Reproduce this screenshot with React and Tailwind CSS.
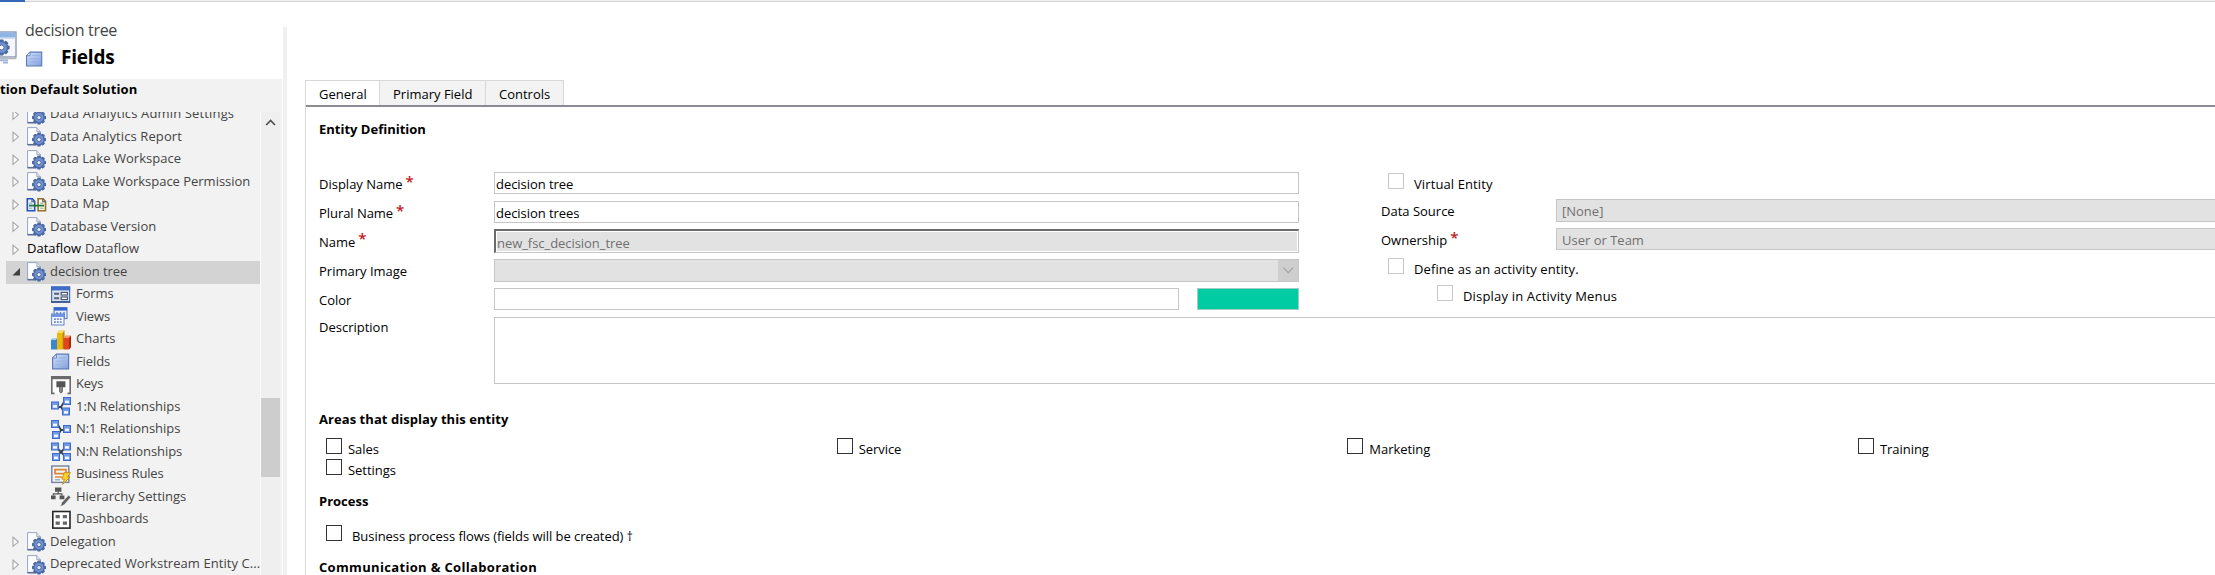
const Svg = ({ children, className = "w-5 h-5" }) => (
  <svg viewBox="0 0 20 20" className={"block shrink-0 " + className}>{children}</svg>
);

const GEAR_TEETH = [0, 45, 90, 135, 180, 225, 270, 315];

const Gear = ({ cx, cy, r, fill = "#4a68a6", hole = "#dfe8f6" }) => (
  <g>
    {GEAR_TEETH.map((a) => (
      <rect key={a} x={cx - r * 0.25} y={cy - r} width={r * 0.5} height={r} rx="0.8" fill={fill} transform={`rotate(${a} ${cx} ${cy})`} />
    ))}
    <circle cx={cx} cy={cy} r={r * 0.82} fill={fill} />
    <circle cx={cx} cy={cy} r={r * 0.66} fill="#7391cc" />
    <circle cx={cx} cy={cy} r={r * 0.3} fill={hole} stroke="#3d5c9c" strokeWidth="0.8" />
  </g>
);

const EntityIcon = () => (
  <Svg>
    <path d="M.6 .6h9.2l3.6 4V18H.6z" fill="#fdfdff" stroke="#98a4be" strokeWidth="1" />
    <path d="M.5 17.6h8" fill="none" stroke="#5a6c96" strokeWidth="1.4" />
    <path d="M9.8.6v4h3.6" fill="#dfe5f0" stroke="#98a4be" strokeWidth=".9" />
    <Gear cx={12} cy={12.6} r={7} />
  </Svg>
);

const DataMapIcon = () => (
  <Svg className="-ml-px h-5 w-[21px]">
    <path d="M.8 3.7h5l2.4 2.5v9.6H.8z" fill="#eaf2ff" stroke="#2352b8" strokeWidth="1.6" />
    <path d="M11.6 3.7h5l2.4 2.5v9.6h-7.4z" fill="#fff8e4" stroke="#96702e" strokeWidth="1.6" />
    <path d="M5.4 3.7v2.9h2.8M16.2 3.7v2.9H19" fill="none" stroke="#5a6880" strokeWidth="1.2" />
    <path d="M2.6 8.2h3M13.6 8.2h3.4M2.6 13.2h3M13.6 13.2h3.4" stroke="#8aa" strokeWidth="1" />
    <path d="M2.5 10.6h15" stroke="#237a38" strokeWidth="1.8" />
  </Svg>
);

const FormsIcon = () => (
  <Svg>
    <rect x=".6" y="2" width="18" height="15" fill="#d9e3f3" stroke="#4f70ae" strokeWidth="1.2" />
    <rect x="0" y="1.4" width="19.2" height="4" fill="#3f6cc6" />
    <path d="M0 17h19.2" stroke="#344f8a" strokeWidth="1.6" />
    <rect x="10.2" y="7.4" width="6.2" height="2.6" fill="#fff" stroke="#3f4d66" strokeWidth="1.1" />
    <rect x="10.2" y="12" width="6.2" height="2.6" fill="#fff" stroke="#3f4d66" strokeWidth="1.1" />
    <path d="M3 8.8h5.2M3 13.3h5.2" stroke="#566277" strokeWidth="1.9" />
  </Svg>
);

const ViewsIcon = () => (
  <Svg>
    <rect x="3" y=".6" width="13" height="11" fill="#e9f0fc" stroke="#4d72c2" />
    <rect x="3" y=".6" width="13" height="3" fill="#3563cc" />
    <path d="M6 5.2v2M9.5 5.2v2M13 5.2v6" stroke="#4668b6" strokeWidth="1.4" />
    <rect x=".6" y="7" width="12.4" height="11" fill="#f5f8fe" stroke="#6283cb" />
    <rect x=".6" y="7" width="12.4" height="3" fill="#6f95e2" />
    <path d="M3 12.2h8M3 15.2h8" stroke="#6d88be" strokeWidth="1.8" strokeDasharray="1.8 1.1" />
  </Svg>
);

const ChartsIcon = () => (
  <Svg>
    <path d="M0 10l2-2h4.5v11.5H0z" fill="#3a86d0" />
    <path d="M0 10l2-2h4.5l-1.6 2z" fill="#a5d0f4" />
    <path d="M6 3l2-2.5h5.4V18l-1.8 1.6H6z" fill="#e9b90e" />
    <path d="M6 3l2-2.5h5.4L11.6 3z" fill="#f8de70" />
    <path d="M11.6 3l1.8-2.5V18l-1.8 1.6z" fill="#b98a08" />
    <path d="M12.5 8l2-2.2H20V17l-2 2.4h-5.5z" fill="#e2441e" />
    <path d="M12.5 8l2-2.2H20L18 8z" fill="#f79a72" />
    <path d="M18 8l2-2.2V17l-2 2.4z" fill="#a82a0e" />
  </Svg>
);

const FieldsIcon = ({ className }) => (
  <Svg className={className}>
    <defs>
      <linearGradient id="fieldsFill" x1="0" y1="0" x2="1" y2="1">
        <stop offset="0" stopColor="#d3e0fa" />
        <stop offset="1" stopColor="#7f9fdc" />
      </linearGradient>
    </defs>
    <path d="M5.4 2.2h12.2v14.6H1.6V6z" fill="url(#fieldsFill)" stroke="#5f7bb6" strokeWidth="1.2" />
    <path d="M5.4 2.2V6H1.6z" fill="#f4f8ff" stroke="#5f7bb6" strokeWidth=".9" />
    <path d="M7.5 5.8h7.5M4.5 9.2H15M4.5 12.6H15" stroke="#9ab2e4" strokeWidth="1" />
  </Svg>
);

const KeysIcon = () => (
  <Svg>
    <path d="M3.5 18.4H.8V1.8h18.4v16.6h-2.7" fill="#fcfcfc" stroke="#6c6c6c" strokeWidth="1.6" />
    <rect x="0" y="1" width="20" height="3.2" fill="#6a6a6a" />
    <path d="M5.4 6.2h9v6h-2.6v4.6L10 18.6l-1.8-1.8v-4.6H5.4z" fill="#555" />
    <path d="M10 12v5" stroke="#c8c8c8" strokeWidth=".9" />
  </Svg>
);

const Node = ({ x, y }) => (
  <g>
    <rect x={x + 0.5} y={y + 0.5} width="7" height="7" fill="#7099e8" stroke="#3d6bcc" />
    <rect x={x + 2} y={y + 3.6} width="4" height="2.6" fill="#f4f8ff" />
  </g>
);

const OneToNIcon = () => (
  <Svg>
    <path d="M7 10h3l3-5M10 10l3 5" fill="none" stroke="#3c4048" strokeWidth="1.8" />
    <Node x={0} y={4.5} /><Node x={12} y={0} /><Node x={11} y={10.5} />
  </Svg>
);
const NToOneIcon = () => (
  <Svg>
    <path d="M13 10h-3L7 5M10 10l-3 5" fill="none" stroke="#3c4048" strokeWidth="1.8" />
    <Node x={0} y={0} /><Node x={1} y={11} /><Node x={12} y={5} />
  </Svg>
);
const NToNIcon = () => (
  <Svg>
    <path d="M6 6l8 8M14 6l-8 8" stroke="#3c4048" strokeWidth="1.9" />
    <Node x={0} y={0.5} /><Node x={12} y={0.5} /><Node x={1} y={11} /><Node x={12} y={11} />
  </Svg>
);

const RulesIcon = () => (
  <Svg>
    <rect x=".8" y="1" width="17" height="16.4" fill="#f4f5f8" stroke="#73829e" strokeWidth="1.4" />
    <path d="M4 4.6h11v4H4zM4 12h7" fill="none" stroke="#db8436" strokeWidth="1.7" />
    <path d="M4 14.8h5" stroke="#8b9ab8" strokeWidth="1.2" />
    <path d="M13.4 7.6h6L16.6 12H19l-7.4 7.4 1.8-5.2h-2.6z" fill="#fbd12c" stroke="#b8860e" strokeWidth=".8" />
  </Svg>
);

const HierarchyIcon = () => (
  <Svg>
    <path d="M4 .6h6.4v4.2H4zM0 8.4h4.6v3.8H0zM8.6 8.4h4.8v3.8H8.6z" fill="#555" />
    <path d="M7.2 4.6v2.2M2.3 8.6V6.8H11v1.8" fill="none" stroke="#555" strokeWidth="1.2" />
    <path d="M17.6 8.2l2.2 2-6.6 7.6-3.8 1.8 1.4-4z" fill="#606060" stroke="#f2f2f2" strokeWidth=".5" />
  </Svg>
);

const DashboardsIcon = () => (
  <Svg>
    <rect x="1.8" y="1.5" width="17.2" height="16.6" fill="#fff" stroke="#262626" strokeWidth="1.6" />
    <path d="M4.6 4.9h4.2v3.4H4.6zM11.8 4.9H16v3.4h-4.2zM4.6 11.4h4.2v3.4H4.6zM11.8 11.4H16v3.4h-4.2z" fill="#666" />
  </Svg>
);

const SolutionIcon = () => (
  <svg viewBox="0 0 20 34" className="block h-[34px] w-5 shrink-0">
    <rect x="-12" y="1" width="31" height="25" fill="#f5f7fa" stroke="#7b8ba6" strokeWidth="1.2" />
    <rect x="-12" y="1.6" width="30.4" height="5" fill="#8fb4e6" />
    <path d="M-4 7.2h22.4" stroke="#c5d4e8" />
    <Gear cx={4.6} cy={16.5} r={8} hole="#fff" />
    <path d="M0 27.6h19.4" stroke="#b4bac4" strokeWidth="1.4" />
    <path d="M3 29.4h8M6 31.6h5" stroke="#9cb2da" strokeWidth="1.8" />
  </svg>
);

const Expander = ({ open }) => (
  <svg viewBox="0 0 9 12" className="block h-3 w-[9px] shrink-0">
    {open ? <path d="M8 2v7.4H.4z" fill="#404040" /> : <path d="M1 1.2v9.2l5.4-4.6z" fill="#fbfbfb" stroke="#a6a6a6" strokeWidth="1.1" />}
  </svg>
);

const TREE = [
  { label: "Data Analytics Admin Settings", icon: EntityIcon, track: "tracking-[0.15px]" },
  { label: "Data Analytics Report", icon: EntityIcon, track: "tracking-[0.1px]" },
  { label: "Data Lake Workspace", icon: EntityIcon, track: "tracking-[0.05px]" },
  { label: "Data Lake Workspace Permission", icon: EntityIcon, track: "tracking-[-0.02px]" },
  { label: "Data Map", icon: DataMapIcon, track: "tracking-[0.1px]" },
  { label: "Database Version", icon: EntityIcon },
  { label: "Dataflow", alt: "Dataflow" },
  { label: "decision tree", icon: EntityIcon, open: true, track: "tracking-[-0.05px]" },
  { label: "Forms", icon: FormsIcon, child: true, track: "tracking-[-0.1px]" },
  { label: "Views", icon: ViewsIcon, child: true, track: "tracking-[-0.1px]" },
  { label: "Charts", icon: ChartsIcon, child: true },
  { label: "Fields", icon: FieldsIcon, child: true, track: "tracking-[-0.1px]" },
  { label: "Keys", icon: KeysIcon, child: true, track: "tracking-[-0.2px]" },
  { label: "1:N Relationships", icon: OneToNIcon, child: true, track: "tracking-[-0.05px]" },
  { label: "N:1 Relationships", icon: NToOneIcon, child: true, track: "tracking-[-0.05px]" },
  { label: "N:N Relationships", icon: NToNIcon, child: true, track: "tracking-[-0.08px]" },
  { label: "Business Rules", icon: RulesIcon, child: true, track: "tracking-[-0.15px]" },
  { label: "Hierarchy Settings", icon: HierarchyIcon, child: true },
  { label: "Dashboards", icon: DashboardsIcon, child: true, track: "tracking-[-0.08px]" },
  { label: "Delegation", icon: EntityIcon, track: "tracking-[0.05px]" },
  { label: "Deprecated Workstream Entity C...", icon: EntityIcon, track: "tracking-[0.06px]" },
];

const TreeRow = ({ item }) => {
  const Icon = item.icon;
  return (
    <div className={"ml-1.5 flex h-[22.5px] w-[254px] shrink-0 items-center " + (item.open ? "bg-[#d3d3d3]" : "")}>
      {item.child ? <div className="w-[45px] shrink-0" /> : (
        <div className="flex w-[21px] shrink-0 pl-1.5"><Expander open={item.open} /></div>
      )}
      {Icon ? <Icon /> : <span className="-mt-[2px] text-black">{item.alt}</span>}
      <span className={"-mt-[2px] whitespace-nowrap " + (item.track || "tracking-normal") + (!Icon ? " ml-1" : item.child ? " ml-[5px]" : " ml-[3px]")}>{item.label}</span>
    </div>
  );
};

const Sidebar = () => (
  <aside className="flex w-[282px] shrink-0 flex-col">
    <div className="flex h-[77px] shrink-0 pt-7">
      <div className="-ml-[3px] mt-px"><SolutionIcon /></div>
      <div className="ml-[8px] -mt-[12px]">
        <div className="h-[25px] whitespace-nowrap text-[16px] leading-[25px] tracking-[-0.3px] text-[#444]">decision tree</div>
        <div className="flex h-7 items-center">
          <FieldsIcon className="mt-[5px] h-[19px] w-[19px]" />
          <span className="ml-[17px] text-[19px] font-bold leading-7 tracking-[-0.2px]">Fields</span>
        </div>
      </div>
    </div>
    <div className="flex min-h-0 flex-1 flex-col bg-[#f2f2f2]">
      <div className="h-[33px] shrink-0 whitespace-nowrap text-[13px] font-bold leading-[21px] tracking-[0.1px]">tion Default Solution</div>
      <div className="flex min-h-0 flex-1">
        <div className="flex w-[260px] flex-col overflow-hidden text-[#444]">
          <div className="-mt-[8.5px] flex flex-col">
            {TREE.map((item, i) => <TreeRow key={i} item={item} />)}
          </div>
        </div>
        <div className="flex w-5 flex-col border-l border-[#fafafa] bg-[#efefef]">
          <svg viewBox="0 0 19 20" className="block h-5 w-[19px]">
            <path d="M5.2 13l4.4-4.6 4.4 4.6" fill="none" stroke="#505050" strokeWidth="1.7" />
          </svg>
          <div className="mt-[266px] h-[79px] bg-[#cdcdcd]" />
        </div>
      </div>
    </div>
  </aside>
);

const Label = ({ children, required }) => (
  <div className="flex w-[175px] shrink-0 whitespace-nowrap">
    {children}
    {required && <span className="-mt-px ml-[3px] text-[15px] font-semibold leading-[20px] text-[#c4161c]">*</span>}
  </div>
);

const Check = ({ muted }) => (
  <span className={"block h-4 w-4 shrink-0 border bg-white " + (muted ? "border-[#c8c8c8]" : "border-[#333]")} />
);

const Field = ({ label, required, className, children }) => (
  <div className={"flex " + className}>
    <Label required={required}>{label}</Label>
    {children}
  </div>
);

const Tabs = () => (
  <div className="flex h-[27px] border-b-2 border-[#8a8b94]">
    <div className="w-[74px] border-t border-r border-[#d8d8d8] bg-white pl-[13px] leading-[26px]">General</div>
    <div className="w-[106px] border-t border-r border-[#d8d8d8] bg-[#f3f3f3] pl-[13px] leading-[26px]">Primary Field</div>
    <div className="w-[78px] border-t border-r border-[#d8d8d8] bg-[#f3f3f3] pl-[13px] leading-[26px]">Controls</div>
  </div>
);

const AREAS = ["Sales", "Service", "Marketing", "Training", "Settings"];

const Main = () => (
  <main className="ml-[18px] mt-[78px] flex min-w-0 flex-1 flex-col border-l border-[#d8d8d8]">
    <Tabs />
    <div className="flex flex-col pl-[13px] leading-[22px]">
      <h2 className="mt-[11px] h-[23px] font-bold">Entity Definition</h2>
      <div className="mt-[31px] flex h-[145px]">
        <div className="flex w-[980px] shrink-0 flex-col">
          <Field label="Display Name" required className="h-[22px] leading-[25px]">
            <div className="flex-1 border border-[#c6c6c6] pl-px leading-[22px] tracking-[-0.05px]">decision tree</div>
          </Field>
          <Field label="Plural Name" required className="mt-[7px] h-[22px] leading-[25px] tracking-[-0.05px]">
            <div className="flex-1 border border-[#c6c6c6] pl-px leading-[22px]">decision trees</div>
          </Field>
          <Field label="Name" required className="mt-[6px] h-6 leading-[27px] tracking-[-0.05px]">
            <div className="flex flex-1 border-t-2 border-r border-b border-l-2 border-[#c6c6c6] border-t-[#6b6b6b] border-l-[#6b6b6b] p-px">
              <div className="flex-1 bg-[#e2e2e2] leading-[22px] text-[#707070]">new_fsc_decision_tree</div>
            </div>
          </Field>
          <Field label="Primary Image" className="mt-[6px] h-[23px] leading-[25px]">
            <div className="flex flex-1 justify-end border border-[#c6c6c6] bg-[#e2e2e2]">
              <svg viewBox="0 0 20 21" className="block h-[21px] w-5 bg-[#cecece]">
                <path d="M5.4 7.6l4.8 5 4.8-5" fill="none" stroke="#a2a2a2" strokeWidth="1.1" />
              </svg>
            </div>
          </Field>
          <Field label="Color" className="mt-[6px] h-[22px] leading-[25px]">
            <div className="w-[685px] border border-[#c6c6c6]" />
            <div className="ml-[18px] flex-1 border border-[#a0cfc2] bg-[#00cca3]" />
          </Field>
        </div>
        <div className="flex min-w-0 flex-1 flex-col pl-[82px]">
          <div className="mt-px flex h-[26px] pl-[7px]"><Check muted /><span className="ml-[10px] tracking-[0.1px]">Virtual Entity</span></div>
          <Field label="Data Source" className="h-[23px] leading-[25px]">
            <div className="flex-1 border border-r-0 border-[#c6c6c6] bg-[#e2e2e2] pl-[5px] leading-[23px] text-[#707070]">[None]</div>
          </Field>
          <Field label="Ownership" required className="mt-[6px] h-[22px] leading-[24px]">
            <div className="flex-1 border border-r-0 border-[#c6c6c6] bg-[#e2e2e2] pl-[5px] leading-[22px] text-[#707070]">User or Team</div>
          </Field>
          <div className="mt-2 flex h-[27px] pl-[7px]"><Check muted /><span className="ml-[10px] tracking-[0.1px]">Define as an activity entity.</span></div>
          <div className="flex pl-[56px]"><Check muted /><span className="ml-[10px] tracking-[0.18px]">Display in Activity Menus</span></div>
        </div>
      </div>
      <Field label="Description" className="h-[67px] leading-[20px]">
        <div className="flex-1 border border-r-0 border-[#c6c6c6]" />
      </Field>
      <h2 className="mt-[24px] h-[22px] font-bold tracking-[0.06px]">Areas that display this entity</h2>
      <div className="mt-2 grid grid-cols-[repeat(4,510.67px)] grid-rows-[21px_21px] pl-[7px]">
        {AREAS.map((a) => (
          <div key={a} className="flex"><Check /><span className="ml-[6px] tracking-[-0.05px]">{a}</span></div>
        ))}
      </div>
      <h2 className="mt-[10px] h-[22px] font-bold">Process</h2>
      <div className="mt-[13px] flex h-[31px] pl-[7px]"><Check /><span className="ml-[10px] leading-[23px] tracking-[-0.05px]">Business process flows (fields will be created) <span className="text-[12px]">†</span></span></div>
      <h2 className="h-[22px] font-bold tracking-[0.33px]">Communication &amp; Collaboration</h2>
    </div>
  </main>
);

export default function App() {
  return (
    <div className="flex h-[575px] w-[2215px] flex-col overflow-hidden bg-white font-['Open_Sans','Noto_Sans',sans-serif] text-[13px] text-black">
      <div className="h-0.5 shrink-0 border-b border-[#d4d4d4] bg-[#f0f0f0]">
        <div className="h-0.5 w-[25px] bg-[#3568b8]" />
      </div>
      <div className="flex min-h-0 flex-1">
        <Sidebar />
        <div className="ml-px mt-[25px] w-1 shrink-0 bg-[#f0f0f0]" />
        <Main />
      </div>
    </div>
  );
}
